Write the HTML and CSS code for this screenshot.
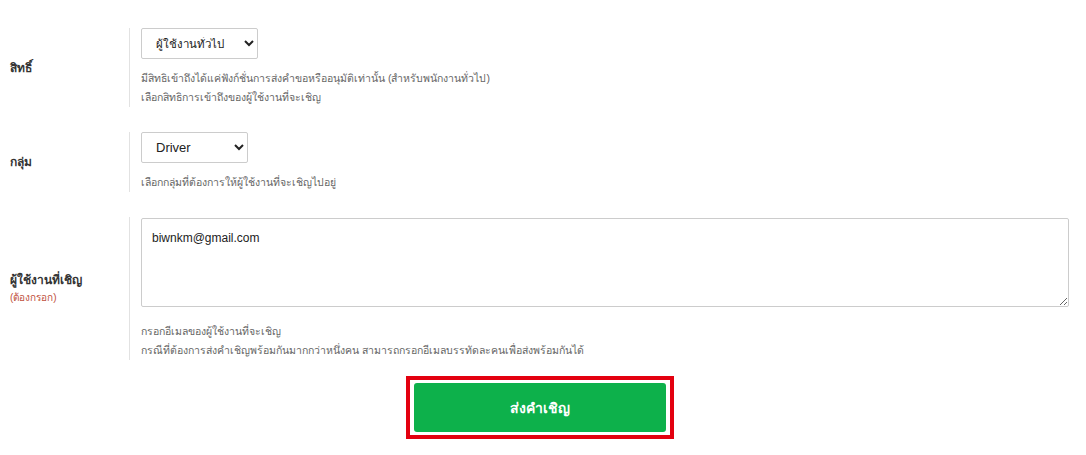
FILE: index.html
```html
<!DOCTYPE html>
<html lang="th">
<head>
    <meta charset="UTF-8">
    <meta name="viewport" content="width=device-width, initial-scale=1.0">
    <title>เชิญผู้ใช้งาน</title>
    <link rel="stylesheet" href="styles.css">
</head>
<body>
    <form class="invite-form">
        <div class="form-row">
            <label class="form-label" for="role">สิทธิ์</label>
            <div class="form-field">
                <select id="role" class="form-select select-role">
                    <option>ผู้ใช้งานทั่วไป</option>
                </select>
                <p class="form-help">มีสิทธิเข้าถึงได้แค่ฟังก์ชั่นการส่งคำขอหรืออนุมัติเท่านั้น (สำหรับพนักงานทั่วไป)<br>เลือกสิทธิการเข้าถึงของผู้ใช้งานที่จะเชิญ</p>
            </div>
        </div>
        <div class="form-row">
            <label class="form-label" for="group">กลุ่ม</label>
            <div class="form-field">
                <select id="group" class="form-select select-group">
                    <option>Driver</option>
                </select>
                <p class="form-help">เลือกกลุ่มที่ต้องการให้ผู้ใช้งานที่จะเชิญไปอยู่</p>
            </div>
        </div>
        <div class="form-row">
            <label class="form-label" for="emails">ผู้ใช้งานที่เชิญ<small class="required">(ต้องกรอก)</small></label>
            <div class="form-field">
                <textarea id="emails" class="form-textarea">biwnkm@gmail.com</textarea>
                <p class="form-help">กรอกอีเมลของผู้ใช้งานที่จะเชิญ<br>กรณีที่ต้องการส่งคำเชิญพร้อมกันมากกว่าหนึ่งคน สามารถกรอกอีเมลบรรทัดละคนเพื่อส่งพร้อมกันได้</p>
            </div>
        </div>
        <div class="form-actions">
            <span class="highlight">
                <button type="button" class="btn-submit">ส่งคำเชิญ</button>
            </span>
        </div>
    </form>
</body>
</html>
```

FILE: styles.css
```css
html{
    box-sizing: border-box;
    font-family: Tahoma, "Liberation Sans", "Noto Sans", sans-serif;
    font-size: 12px;
}
*,
*::after,
*::before{
    box-sizing: inherit;
}
body{
    margin: 0;
    background-color: #fff;
    color: #333;
}
.invite-form{
    padding: 28px 17px 0 10px;
}
.form-row{
    display: flex;
    align-items: center;
    margin-bottom: 25px;
}
.form-label{
    width: 119px;
    font-weight: bold;
    font-size: 12px;
    color: #333;
    line-height: 18px;
}
.required{
    display: block;
    font-weight: normal;
    font-size: 10px;
    color: #c0503c;
}
.form-field{
    flex: 1;
    border-left: 1px solid #e2e2e2;
    padding-left: 11px;
}
.form-select{
    display: block;
    height: 31px;
    padding: 0 8px 0 10px;
    border: 1px solid #ccc;
    border-radius: 2px;
    background-color: #fff;
    font-family: inherit;
    font-size: 13px;
    color: #222;
}
.select-role{
    width: 117px;
    font-size: 11.5px;
}
.select-group{
    width: 107px;
}
.form-textarea{
    display: block;
    width: 100%;
    height: 89px;
    margin-top: 1px;
    padding: 12px 10px;
    border: 1px solid #ccc;
    border-radius: 2px;
    font-family: inherit;
    font-size: 12px;
    color: #222;
    resize: vertical;
}
.form-help{
    margin: 10px 0 0;
    font-size: 10.5px;
    line-height: 19px;
    color: #666;
}
.form-textarea + .form-help{
    margin-top: 15px;
}
.form-actions{
    display: flex;
    justify-content: center;
    margin-top: -9px;
}
.highlight{
    display: inline-block;
    border: 4px solid #e3000f;
    padding: 3px 4px 3px 4px;
}
.btn-submit{
    display: block;
    width: 252px;
    height: 49px;
    border: none;
    border-radius: 3px;
    background-color: #0db14b;
    color: #fff;
    font-family: inherit;
    font-size: 14px;
    font-weight: bold;
}
```
